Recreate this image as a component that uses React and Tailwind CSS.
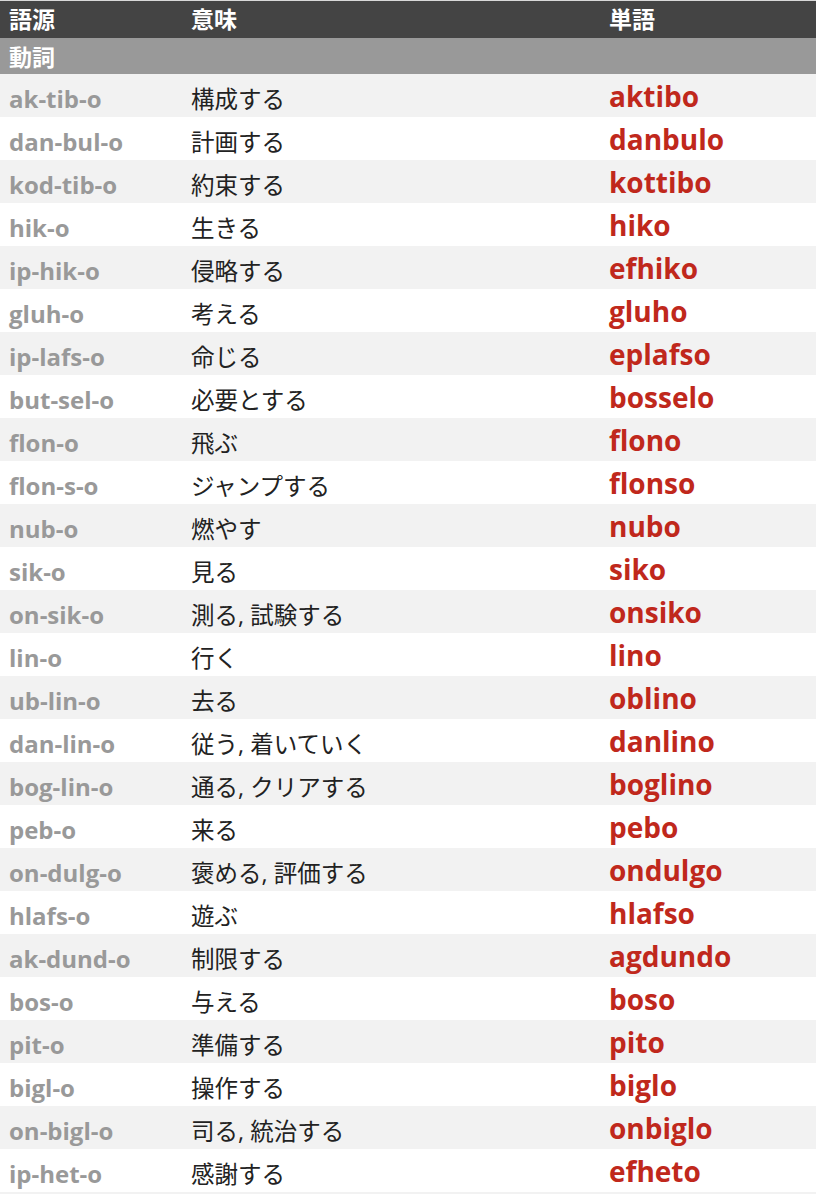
const rows = [
  ["ak-tib-o", "構成する", "aktibo"],
  ["dan-bul-o", "計画する", "danbulo"],
  ["kod-tib-o", "約束する", "kottibo"],
  ["hik-o", "生きる", "hiko"],
  ["ip-hik-o", "侵略する", "efhiko"],
  ["gluh-o", "考える", "gluho"],
  ["ip-lafs-o", "命じる", "eplafso"],
  ["but-sel-o", "必要とする", "bosselo"],
  ["flon-o", "飛ぶ", "flono"],
  ["flon-s-o", "ジャンプする", "flonso"],
  ["nub-o", "燃やす", "nubo"],
  ["sik-o", "見る", "siko"],
  ["on-sik-o", "測る, 試験する", "onsiko"],
  ["lin-o", "行く", "lino"],
  ["ub-lin-o", "去る", "oblino"],
  ["dan-lin-o", "従う, 着いていく", "danlino"],
  ["bog-lin-o", "通る, クリアする", "boglino"],
  ["peb-o", "来る", "pebo"],
  ["on-dulg-o", "褒める, 評価する", "ondulgo"],
  ["hlafs-o", "遊ぶ", "hlafso"],
  ["ak-dund-o", "制限する", "agdundo"],
  ["bos-o", "与える", "boso"],
  ["pit-o", "準備する", "pito"],
  ["bigl-o", "操作する", "biglo"],
  ["on-bigl-o", "司る, 統治する", "onbiglo"],
  ["ip-het-o", "感謝する", "efheto"],
];

const font = { fontFamily: '"Open Sans", "Noto Sans CJK JP", sans-serif' };

export default function App() {
  return (
    <div className="w-[816px] h-[1194px] bg-white overflow-hidden" style={font}>
      <div className="h-px bg-[#d9d9d9]" />
      <div className="grid grid-cols-[191px_418px_207px] h-[37px] bg-[#444444] text-white font-bold text-[23px] leading-none items-center">
        <div className="pl-[9px]">語源</div>
        <div>意味</div>
        <div>単語</div>
      </div>
      <div className="h-[36px] bg-[#999999] text-white font-bold text-[23px] leading-none flex items-center pl-[9px] pt-[2px]">
        動詞
      </div>
      {rows.map((r, i) => (
        <div
          key={i}
          className={`grid grid-cols-[191px_418px_207px] h-[43px] items-center leading-none ${i % 2 === 0 ? "bg-[#f2f2f2]" : "bg-white"}`}
        >
          <div className="pl-[9px] text-[#999999] font-bold text-[24px] pt-[7px]">{r[0]}</div>
          <div className="text-[#222222] text-[23.5px] pt-[8px]">{r[1]}</div>
          <div className="text-[#c0281c] font-bold text-[28px]">{r[2]}</div>
        </div>
      ))}
      <div className="h-[2px] bg-[#f2f2f2]" />
    </div>
  );
}
